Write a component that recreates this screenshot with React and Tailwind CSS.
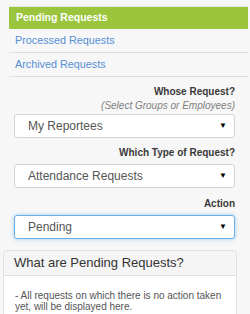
const Select = ({ value, focused }) => (
    <div
        className={`h-[24px] bg-white rounded-[3px] border flex items-center justify-between pl-[13px] pr-[7px] text-[12px] text-[#555] ${
            focused
                ? 'border-[#66afe9] shadow-[0_0_4px_rgba(102,175,233,0.6)]'
                : 'border-[#d5d5d5]'
        }`}
    >
        <span>{value}</span>
        <span className="text-[8px] text-black leading-none">▼</span>
    </div>
);

const App = () => {
    return (
        <div
            className="w-[250px] h-[314px] overflow-hidden bg-[#f7f7f7]"
            style={{ fontFamily: '"Liberation Sans", Arial, sans-serif' }}
        >
            {/* Request tabs */}
            <div className="pt-[6px] pl-[9px] pr-[2px]">
                <div className="border-t border-[#e6e6e6]">
                    <div className="h-[22px] bg-[#9ac53d] text-white font-bold text-[10.5px] pl-[7px] flex items-center">
                        Pending Requests
                    </div>
                    <div className="h-[24px] border-b border-[#dedede] text-[#5590d4] text-[10.8px] pl-[6px] flex items-center">
                        Processed Requests
                    </div>
                    <div className="h-[24px] border-b border-[#dedede] text-[#5590d4] text-[10.8px] pl-[6px] flex items-center">
                        Archived Requests
                    </div>
                </div>
            </div>

            {/* Filters */}
            <div className="pl-[14px] pr-[15px] pt-[8px]">
                <div className="text-right text-[10px] leading-[14px] font-bold text-[#3a3a3a]">Whose Request?</div>
                <div className="text-right text-[10px] leading-[14px] italic text-[#808080]">
                    (Select Groups or Employees)
                </div>
                <div className="mt-[1px]">
                    <Select value="My Reportees" />
                </div>

                <div className="mt-[8px] text-right text-[10px] leading-[14px] font-bold text-[#3a3a3a]">
                    Which Type of Request?
                </div>
                <div className="mt-[4px]">
                    <Select value="Attendance Requests" />
                </div>

                <div className="mt-[9px] text-right text-[10px] leading-[14px] font-bold text-[#3a3a3a]">Action</div>
                <div className="mt-[4px]">
                    <Select value="Pending" focused />
                </div>
            </div>

            {/* Info panel */}
            <div className="mt-[11px] ml-[3px] w-[234px] bg-white border border-[#e0e0e0] rounded-t-[4px]">
                <div className="h-[25px] bg-[#f5f5f5] border-b border-[#e0e0e0] rounded-t-[4px] pl-[10px] flex items-center text-[13px] text-[#333]">
                    What are Pending Requests?
                </div>
                <div className="pt-[14px] pl-[11px] pr-[6px] pb-[10px] text-[10px] leading-[11px] text-[#555]">
                    - All requests on which there is no action taken yet, will be displayed here.
                </div>
            </div>
        </div>
    );
};

export default App;
